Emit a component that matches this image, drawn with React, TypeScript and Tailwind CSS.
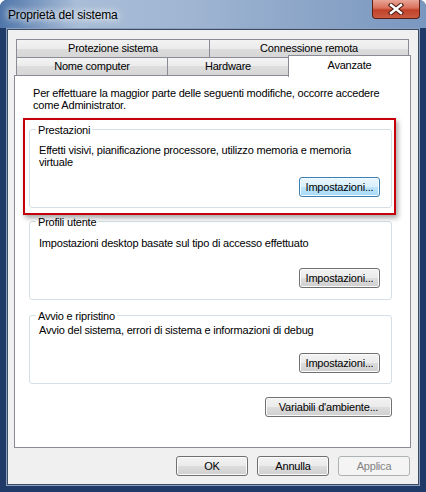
import React from 'react';

// Win7 style push button
function Button({
  label,
  className = '',
  focused = false,
  disabled = false,
}: {
  label: string;
  className?: string;
  focused?: boolean;
  disabled?: boolean;
}) {
  let look =
    'border-[#707070] text-black bg-[linear-gradient(#f2f2f2,#ebebeb_50%,#dddddd_50%,#cfcfcf)] shadow-[inset_0_0_0_1px_#fbfbfb]';
  if (focused) {
    look =
      'border-[#3c7fb1] text-black bg-[linear-gradient(#eaf6fd,#d9f0fc_50%,#bee6fd_50%,#a7d9f5)] shadow-[inset_0_0_0_1px_#f4fbff]';
  }
  if (disabled) {
    look = 'border-[#adb2b5] text-[#838383] bg-[#f4f4f4]';
  }
  return (
    <button
      className={`h-[20px] rounded-[3px] border text-[11px] leading-[18px] tracking-[-0.2px] flex items-center justify-center ${look} ${className}`}
    >
      {label}
    </button>
  );
}

// Group box with its caption lying over the top border
function GroupBox({
  title,
  className = '',
  children,
}: {
  title: string;
  className?: string;
  children: React.ReactNode;
}) {
  return (
    <div className={`relative w-[363px] rounded-[3px] border border-[#d5dfe5] flex flex-col ${className}`}>
      <span className="absolute -top-[6px] left-[6px] bg-white px-[2px] leading-[12px]">{title}</span>
      {children}
    </div>
  );
}

function Tab({ label, className = '' }: { label: string; className?: string }) {
  return (
    <div
      className={`h-[19px] border border-[#898c95] bg-[linear-gradient(#f3f3f3,#ebebeb_50%,#dddddd_50%,#d6d6d6)] flex items-center justify-center leading-[13px] ${className}`}
    >
      {label}
    </div>
  );
}

export default function App() {
  return (
    <div className="w-[426px] h-[492px] bg-[#1f3a66] rounded-t-[7px] overflow-hidden flex flex-col font-['Liberation_Sans',Arial,sans-serif] text-[11px] tracking-[-0.2px] text-black">
      {/* Title bar */}
      <div className="h-[28px] shrink-0 pl-[8px] pr-[6px] flex items-start justify-between bg-[linear-gradient(90deg,#4f76aa,#a9bdd7_18%,#9fb5d2_45%,#8aa4c7_75%,#7a97bf)]">
        <span className="mt-[8px] text-[12px] leading-[14px] tracking-[-0.15px] [text-shadow:0_0_6px_#ffffff,0_0_10px_#ffffff]">
          Proprietà del sistema
        </span>
        <div className="w-[48px] h-[19px] rounded-b-[4px] border border-t-0 border-[#5b2016] bg-[linear-gradient(#e9a597,#d9705b_45%,#c2412a_55%,#c95c42)] flex items-center justify-center">
          <svg width="16" height="12" viewBox="0 0 16 12">
            <path d="M3 2 L13 10 M13 2 L3 10" stroke="#4b1c14" strokeWidth="4.5" strokeLinecap="square" />
            <path d="M3 2 L13 10 M13 2 L3 10" stroke="#ffffff" strokeWidth="2.4" strokeLinecap="square" />
          </svg>
        </div>
      </div>

      {/* Client area */}
      <div className="mx-[6px] border border-[#8aa0be] flex-1 flex flex-col">
        <div className="border border-[#3a4b63] bg-[#f0f0f0] h-[456px] flex flex-col pt-[9px] pl-[6px] pr-[7px]">
          {/* Tabs */}
          <div className="h-[36px] pl-[2px] flex flex-col">
            <div className="flex">
              <Tab label="Protezione sistema" className="w-[194px]" />
              <Tab label="Connessione remota" className="w-[200px] -ml-px" />
            </div>
            <div className="flex items-start -mt-px">
              <Tab label="Nome computer" className="w-[152px]" />
              <Tab label="Hardware" className="w-[122px] -ml-px" />
              <div className="relative z-10 w-[123px] h-[22px] -mt-[2px] -ml-px border border-b-0 border-[#898c95] bg-white flex justify-center pt-[3px] leading-[13px]">
                Avanzate
              </div>
            </div>
          </div>

          {/* Tab page */}
          <div className="relative h-[373px] w-[397px] border border-[#898c95] bg-white pl-[14px] pt-[11px] flex flex-col">
            <p className="ml-[4px] leading-[12px]">
              Per effettuare la maggior parte delle seguenti modifiche, occorre accedere
              <br />
              come Administrator.
            </p>

            <GroupBox title="Prestazioni" className="mt-[18px] h-[79px] pt-[14px] pl-[9px] pr-[11px]">
              <p className="leading-[12px]">
                Effetti visivi, pianificazione processore, utilizzo memoria e memoria
                <br />
                virtuale
              </p>
              <Button label="Impostazioni..." focused className="w-[81px] self-end mt-[9px]" />
            </GroupBox>

            <GroupBox title="Profili utente" className="mt-[13px] h-[79px] pt-[15px] pl-[9px] pr-[11px]">
              <p className="leading-[12px]">Impostazioni desktop basate sul tipo di accesso effettuato</p>
              <Button label="Impostazioni..." className="w-[81px] self-end mt-[19px]" />
            </GroupBox>

            <GroupBox title="Avvio e ripristino" className="mt-[15px] h-[69px] pt-[8px] pl-[9px] pr-[11px]">
              <p className="leading-[12px]">Avvio del sistema, errori di sistema e informazioni di debug</p>
              <Button label="Impostazioni..." className="w-[81px] self-end mt-[17px]" />
            </GroupBox>

            <Button label="Variabili d'ambiente..." className="w-[127px] self-end mr-[18px] mt-[13px]" />

            {/* red highlight annotation */}
            <div className="absolute left-[8px] top-[42px] w-[373px] h-[97px] border-2 border-[#c4000a] shadow-[2px_3px_5px_rgba(0,0,0,0.35)] pointer-events-none" />
          </div>

          {/* Dialog buttons */}
          <div className="mt-[8px] pr-[1px] flex justify-end gap-[9px]">
            <Button label="OK" className="w-[72px]" />
            <Button label="Annulla" className="w-[72px]" />
            <Button label="Applica" disabled className="w-[72px]" />
          </div>
        </div>
      </div>
      <div className="h-[6px] shrink-0" />
    </div>
  );
}
